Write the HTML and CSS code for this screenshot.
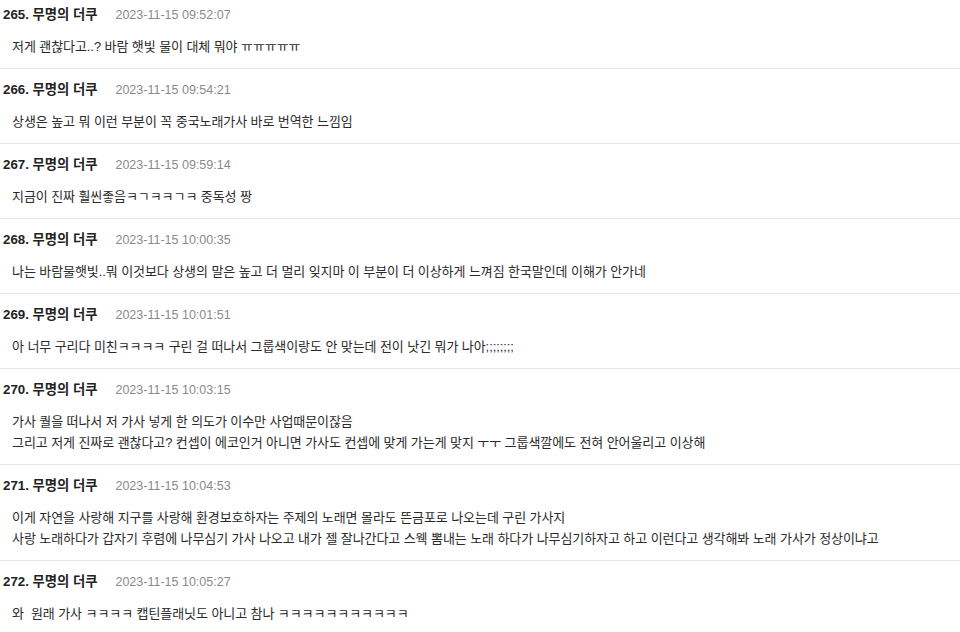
FILE: index.html
```html
<!DOCTYPE html>
<html lang="ko">
<head>
<meta charset="utf-8">
<title>댓글</title>
<link rel="stylesheet" href="styles.css">
</head>
<body>
<div class="comments">
  <div class="comment first">
    <div class="head"><span class="author">265. 무명의 더쿠</span><span class="time">2023-11-15 09:52:07</span></div>
    <div class="body">저게 괜찮다고..? 바람 햇빛 물이 대체 뭐야 ㅠㅠㅠㅠㅠ</div>
  </div>
  <div class="comment">
    <div class="head"><span class="author">266. 무명의 더쿠</span><span class="time">2023-11-15 09:54:21</span></div>
    <div class="body">상생은 높고 뭐 이런 부분이 꼭 중국노래가사 바로 번역한 느낌임</div>
  </div>
  <div class="comment">
    <div class="head"><span class="author">267. 무명의 더쿠</span><span class="time">2023-11-15 09:59:14</span></div>
    <div class="body">지금이 진짜 훨씬좋음ㅋㄱㅋㅋㄱㅋ 중독성 짱</div>
  </div>
  <div class="comment">
    <div class="head"><span class="author">268. 무명의 더쿠</span><span class="time">2023-11-15 10:00:35</span></div>
    <div class="body">나는 바람물햇빛..뭐 이것보다 상생의 말은 높고 더 멀리 잊지마 이 부분이 더 이상하게 느껴짐 한국말인데 이해가 안가네</div>
  </div>
  <div class="comment">
    <div class="head"><span class="author">269. 무명의 더쿠</span><span class="time">2023-11-15 10:01:51</span></div>
    <div class="body">아 너무 구리다 미친ㅋㅋㅋㅋ 구린 걸 떠나서 그룹색이랑도 안 맞는데 전이 낫긴 뭐가 나아;;;;;;;;</div>
  </div>
  <div class="comment">
    <div class="head"><span class="author">270. 무명의 더쿠</span><span class="time">2023-11-15 10:03:15</span></div>
    <div class="body">가사 퀄을 떠나서 저 가사 넣게 한 의도가 이수만 사업때문이잖음<br>그리고 저게 진짜로 괜찮다고? 컨셉이 에코인거 아니면 가사도 컨셉에 맞게 가는게 맞지 ㅜㅜ 그룹색깔에도 전혀 안어울리고 이상해</div>
  </div>
  <div class="comment">
    <div class="head"><span class="author">271. 무명의 더쿠</span><span class="time">2023-11-15 10:04:53</span></div>
    <div class="body">이게 자연을 사랑해 지구를 사랑해 환경보호하자는 주제의 노래면 몰라도 뜬금포로 나오는데 구린 가사지<br>사랑 노래하다가 갑자기 후렴에 나무심기 가사 나오고 내가 젤 잘나간다고 스웩 뽐내는 노래 하다가 나무심기하자고 하고 이런다고 생각해봐 노래 가사가 정상이냐고</div>
  </div>
  <div class="comment">
    <div class="head"><span class="author">272. 무명의 더쿠</span><span class="time">2023-11-15 10:05:27</span></div>
    <div class="body">와&nbsp; 원래 가사 ㅋㅋㅋㅋ 캡틴플래닛도 아니고 참나 ㅋㅋㅋㅋㅋㅋㅋㅋㅋㅋㅋ</div>
  </div>
</div>
</body>
</html>
```

FILE: styles.css
```css
html, body {
  margin: 0;
  padding: 0;
  background: #ffffff;
}

body {
  font-family: "Liberation Sans", "Noto Sans CJK KR", sans-serif;
  color: #222222;
  width: 960px;
  height: 632px;
  overflow: hidden;
}

.comments {
  display: flex;
  flex-direction: column;
}

.comment {
  padding: 12px 0 11px 3px;
  border-bottom: 1px solid #e6e6e6;
  display: flex;
  flex-direction: column;
  gap: 12px;
}

.comment.first {
  padding-top: 6px;
}

.head {
  display: flex;
  align-items: center;
  height: 18px;
  line-height: 18px;
  white-space: nowrap;
}

.author {
  font-size: 13.3px;
  font-weight: bold;
  color: #222222;
}

.time {
  font-size: 12.5px;
  color: #8a8a8a;
  margin-left: 18px;
}

.body {
  padding-left: 9px;
  font-size: 13px;
  line-height: 21px;
  color: #2a2a2a;
  letter-spacing: -0.08px;
  white-space: nowrap;
}
```
